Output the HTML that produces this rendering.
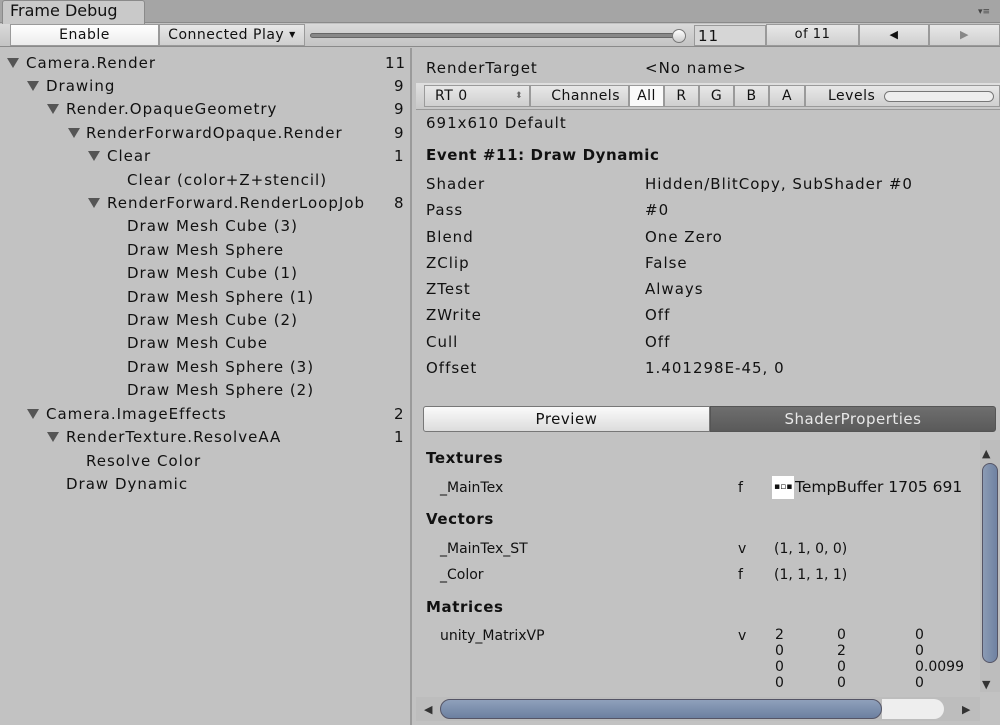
<!DOCTYPE html>
<html><head><style>
*{margin:0;padding:0;box-sizing:border-box}
body{width:1000px;height:725px;background:#c2c2c2;font-family:"DejaVu Sans","Liberation Sans",sans-serif;font-size:15px;color:#111;position:relative;overflow:hidden}
.a{position:absolute;white-space:nowrap;line-height:18px;letter-spacing:1px}
.s{letter-spacing:0}
.tri{position:absolute;width:0;height:0;border-left:6px solid transparent;border-right:6px solid transparent;border-top:10px solid #555}
.b{font-weight:bold;letter-spacing:0.6px}
.btn{position:absolute;background:linear-gradient(#e8e8e8,#cfcfcf);border:1px solid #9a9a9a;text-align:center;font-size:14px;line-height:20px;letter-spacing:0.5px}
</style></head><body>
<div style="position:absolute;left:0;top:0;width:1000px;height:23px;background:#a5a5a5;border-bottom:1px solid #8a8a8a"></div>
<div style="position:absolute;left:2px;top:0;width:143px;height:24px;background:#c9c9c9;border:1px solid #8a8a8a;border-bottom:none;border-radius:3px 3px 0 0"></div>
<div class="a s" style="left:10px;top:2px;font-size:16px">Frame Debug</div>
<div class="a s" style="left:978px;top:8px;font-size:9px;color:#444;line-height:9px">▾≡</div>
<div style="position:absolute;left:0;top:24px;width:1000px;height:23px;background:linear-gradient(#dadada,#c4c4c4);border-bottom:1px solid #8a8a8a"></div>
<div class="btn" style="left:10px;top:24px;width:149px;height:22px;background:linear-gradient(#fff,#ececec)">Enable</div>
<div class="btn" style="left:159px;top:24px;width:146px;height:22px">Connected Play <span style="font-size:8px;vertical-align:top">▼</span></div>
<div style="position:absolute;left:310px;top:33px;width:370px;height:5px;background:#888;border-radius:3px;border:1px solid #666"></div>
<div style="position:absolute;left:672px;top:29px;width:14px;height:14px;border-radius:50%;background:linear-gradient(#fff,#ccc);border:1px solid #777"></div>
<div style="position:absolute;left:694px;top:25px;width:72px;height:21px;background:#d6d6d6;border:1px solid #999"></div>
<div class="a" style="left:698px;top:27px">11</div>
<div class="btn" style="left:766px;top:24px;width:93px;height:22px;font-size:13px">of 11</div>
<div class="btn" style="left:859px;top:24px;width:70px;height:22px;font-size:11px">◀</div>
<div class="btn" style="left:929px;top:24px;width:71px;height:22px;font-size:11px;color:#888">▶</div>
<div style="position:absolute;left:410px;top:48px;width:2px;height:677px;background:#9a9a9a"></div>
<div class="tri" style="left:7px;top:58px"></div><div class="a" style="left:26px;top:54px">Camera.Render</div><div class="a" style="left:385px;top:54px">11</div>
<div class="tri" style="left:27px;top:81px"></div><div class="a" style="left:46px;top:77px">Drawing</div><div class="a" style="left:394px;top:77px">9</div>
<div class="tri" style="left:47px;top:104px"></div><div class="a" style="left:66px;top:100px">Render.OpaqueGeometry</div><div class="a" style="left:394px;top:100px">9</div>
<div class="tri" style="left:68px;top:128px"></div><div class="a" style="left:86px;top:124px">RenderForwardOpaque.Render</div><div class="a" style="left:394px;top:124px">9</div>
<div class="tri" style="left:88px;top:151px"></div><div class="a" style="left:107px;top:147px">Clear</div><div class="a" style="left:394px;top:147px">1</div>
<div class="a" style="left:127px;top:171px">Clear (color+Z+stencil)</div>
<div class="tri" style="left:88px;top:198px"></div><div class="a" style="left:107px;top:194px">RenderForward.RenderLoopJob</div><div class="a" style="left:394px;top:194px">8</div>
<div class="a" style="left:127px;top:217px">Draw Mesh Cube (3)</div>
<div class="a" style="left:127px;top:241px">Draw Mesh Sphere</div>
<div class="a" style="left:127px;top:264px">Draw Mesh Cube (1)</div>
<div class="a" style="left:127px;top:288px">Draw Mesh Sphere (1)</div>
<div class="a" style="left:127px;top:311px">Draw Mesh Cube (2)</div>
<div class="a" style="left:127px;top:334px">Draw Mesh Cube</div>
<div class="a" style="left:127px;top:358px">Draw Mesh Sphere (3)</div>
<div class="a" style="left:127px;top:381px">Draw Mesh Sphere (2)</div>
<div class="tri" style="left:27px;top:409px"></div><div class="a" style="left:46px;top:405px">Camera.ImageEffects</div><div class="a" style="left:394px;top:405px">2</div>
<div class="tri" style="left:47px;top:432px"></div><div class="a" style="left:66px;top:428px">RenderTexture.ResolveAA</div><div class="a" style="left:394px;top:428px">1</div>
<div class="a" style="left:86px;top:452px">Resolve Color</div>
<div class="a" style="left:66px;top:475px">Draw Dynamic</div>
<div class="a" style="left:426px;top:59px">RenderTarget</div>
<div class="a" style="left:645px;top:59px">&lt;No name&gt;</div>
<div style="position:absolute;left:416px;top:83px;width:584px;height:27px;background:linear-gradient(#e0e0e0,#c8c8c8);border-bottom:1px solid #999"></div>
<div class="btn" style="left:424px;top:85px;width:106px;height:22px;text-align:left;padding-left:10px">RT 0<span style="position:absolute;right:6px;font-size:9px;color:#666">⬍</span></div>
<div class="btn" style="left:530px;top:85px;width:99px;height:22px;text-align:right;padding-right:8px">Channels</div>
<div class="btn" style="left:629px;top:85px;width:35px;height:22px;background:#fafafa">All</div>
<div class="btn" style="left:664px;top:85px;width:35px;height:22px">R</div>
<div class="btn" style="left:699px;top:85px;width:35px;height:22px">G</div>
<div class="btn" style="left:734px;top:85px;width:35px;height:22px">B</div>
<div class="btn" style="left:769px;top:85px;width:36px;height:22px">A</div>
<div class="btn" style="left:805px;top:85px;width:195px;height:22px;text-align:left;padding-left:22px">Levels</div>
<div style="position:absolute;left:884px;top:91px;width:110px;height:11px;border:1px solid #777;border-radius:6px;background:#eee"></div>
<div class="a" style="left:426px;top:114px">691x610 Default</div>
<div class="a b" style="left:426px;top:146px">Event #11: Draw Dynamic</div>
<div class="a" style="left:426px;top:175px">Shader</div><div class="a" style="left:645px;top:175px">Hidden/BlitCopy, SubShader #0</div>
<div class="a" style="left:426px;top:201px">Pass</div><div class="a" style="left:645px;top:201px">#0</div>
<div class="a" style="left:426px;top:228px">Blend</div><div class="a" style="left:645px;top:228px">One Zero</div>
<div class="a" style="left:426px;top:254px">ZClip</div><div class="a" style="left:645px;top:254px">False</div>
<div class="a" style="left:426px;top:280px">ZTest</div><div class="a" style="left:645px;top:280px">Always</div>
<div class="a" style="left:426px;top:306px">ZWrite</div><div class="a" style="left:645px;top:306px">Off</div>
<div class="a" style="left:426px;top:333px">Cull</div><div class="a" style="left:645px;top:333px">Off</div>
<div class="a" style="left:426px;top:359px">Offset</div><div class="a" style="left:645px;top:359px">1.401298E-45, 0</div>
<div style="position:absolute;left:423px;top:406px;width:287px;height:26px;background:linear-gradient(#fafafa,#dcdcdc);border:1px solid #777;border-radius:3px 0 0 3px;text-align:center;line-height:24px;letter-spacing:0.5px">Preview</div>
<div style="position:absolute;left:710px;top:406px;width:286px;height:26px;background:linear-gradient(#6e6e6e,#5a5a5a);border:1px solid #555;border-radius:0 3px 3px 0;text-align:center;line-height:24px;color:#e8e8e8;letter-spacing:0.5px">ShaderProperties</div>
<div class="a b" style="left:426px;top:449px">Textures</div>
<div class="a s" style="left:440px;top:479px;font-size:14px">_MainTex</div><div class="a s" style="left:738px;top:479px;font-size:14px">f</div>
<div style="position:absolute;left:772px;top:476px;width:22px;height:23px;background:#fff"></div>
<div class="a s" style="left:774px;top:481px;font-size:9px;line-height:12px">▪▫▪</div>
<div class="a s" style="left:795px;top:478px;font-size:15.5px">TempBuffer 1705 691</div>
<div class="a b" style="left:426px;top:510px">Vectors</div>
<div class="a s" style="left:440px;top:540px;font-size:14px">_MainTex_ST</div><div class="a s" style="left:738px;top:540px;font-size:14px">v</div><div class="a s" style="left:774px;top:540px;font-size:14px">(1, 1, 0, 0)</div>
<div class="a s" style="left:440px;top:566px;font-size:14px">_Color</div><div class="a s" style="left:738px;top:566px;font-size:14px">f</div><div class="a s" style="left:774px;top:566px;font-size:14px">(1, 1, 1, 1)</div>
<div class="a b" style="left:426px;top:598px">Matrices</div>
<div class="a s" style="left:440px;top:627px;font-size:14px">unity_MatrixVP</div><div class="a s" style="left:738px;top:627px;font-size:14px">v</div>
<div class="a s" style="left:775px;top:627px;font-size:14px;line-height:16px">2<br>0<br>0<br>0</div>
<div class="a s" style="left:837px;top:627px;font-size:14px;line-height:16px">0<br>2<br>0<br>0</div>
<div class="a s" style="left:915px;top:627px;font-size:14px;line-height:16px">0<br>0<br>0.0099<br>0</div>
<div style="position:absolute;left:980px;top:440px;width:20px;height:252px;background:#bdbdbd"></div>
<div class="a s" style="left:982px;top:445px;font-size:11px;color:#333">▲</div>
<div style="position:absolute;left:982px;top:463px;width:16px;height:200px;border-radius:8px;background:linear-gradient(90deg,#8b9bb4,#6f82a2);border:1px solid #556"></div>
<div class="a s" style="left:982px;top:676px;font-size:11px;color:#333">▼</div>
<div style="position:absolute;left:416px;top:697px;width:564px;height:24px;background:#bdbdbd"></div>
<div class="a s" style="left:424px;top:701px;font-size:11px;color:#333">◀</div>
<div style="position:absolute;left:440px;top:699px;width:442px;height:20px;border-radius:10px;background:linear-gradient(#8fa0bb,#6c80a0);border:1px solid #556"></div>
<div style="position:absolute;left:882px;top:699px;width:62px;height:20px;border-radius:0 10px 10px 0;background:#eee"></div>
<div class="a s" style="left:962px;top:701px;font-size:11px;color:#333">▶</div>
</body></html>
